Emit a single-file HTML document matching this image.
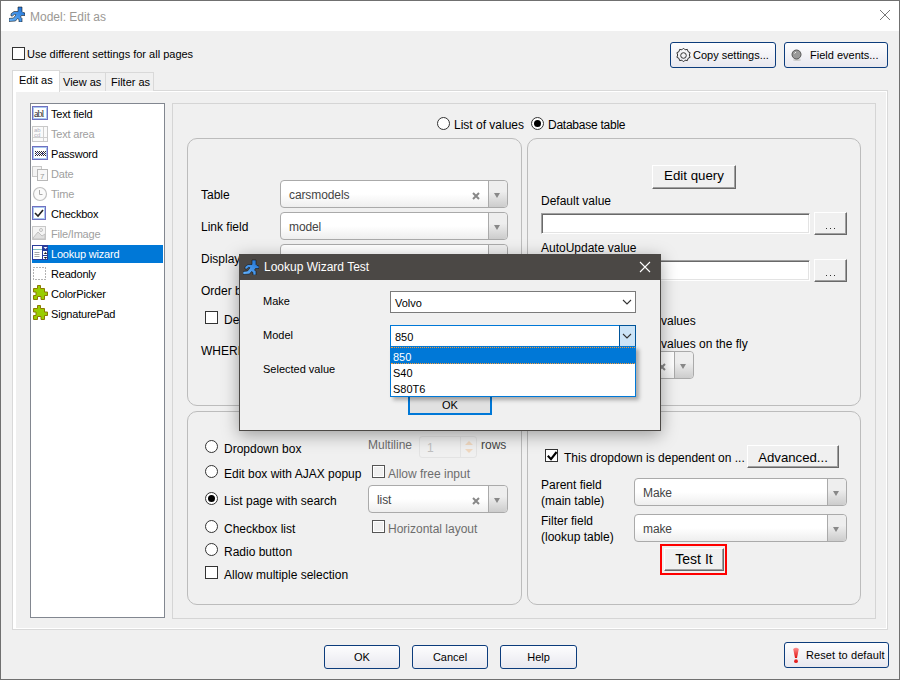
<!DOCTYPE html>
<html><head><meta charset="utf-8">
<style>
*{box-sizing:border-box;margin:0;padding:0}
html,body{width:900px;height:680px;overflow:hidden;background:#f0f0f0}
body{position:relative;font-family:"Liberation Sans",sans-serif;font-size:12px;color:#000}
.a{position:absolute}
.t{position:absolute;white-space:nowrap;line-height:1}
.lb{font-size:11px;letter-spacing:-0.2px}
.dis{color:#a0a0a0}
.win{left:0;top:0;width:900px;height:680px;border:1px solid #707070;background:#f0f0f0}
.title{left:1px;top:1px;width:898px;height:30px;background:#fff}
.chk{position:absolute;width:13px;height:13px;border:1px solid #333;background:#fff}
.rad{position:absolute;width:13px;height:13px;border:1px solid #333;border-radius:50%;background:#fff}
.rbtn{position:absolute;font-size:11px;border:1px solid #0c3c7c;border-radius:3px;background:linear-gradient(#fdfdfe,#e8e8ef);text-align:center;line-height:22px}
.gbox{position:absolute;border:1px solid #bcbcbc;border-radius:10px}
.btn3d{position:absolute;background:#f0f0f0;border-top:1px solid #fff;border-left:1px solid #fff;border-right:1px solid #696969;border-bottom:1px solid #696969;box-shadow:inset -1px -1px 0 #a0a0a0;text-align:center}
.sunk{position:absolute;background:#fff;border-top:1px solid #a0a0a0;border-left:1px solid #a0a0a0;border-right:1px solid #fff;border-bottom:1px solid #fff;box-shadow:inset 1px 1px 0 #696969,inset -1px -1px 0 #e3e3e3}
.s2{position:absolute;height:28px;border:1px solid #aaa;border-radius:4px;background:linear-gradient(to top,#eee 0%,#fff 50%)}
.s2 .arr{position:absolute;right:0;top:0;width:19px;height:26px;border-left:1px solid #aaa;border-radius:0 4px 4px 0;background:linear-gradient(to top,#ccc 0%,#eee 60%)}
.s2 .arr:after{content:"";position:absolute;left:5px;top:12px;border-left:3px solid transparent;border-right:3px solid transparent;border-top:5px solid #888}
.s2 .x{position:absolute;top:11px;width:8px;height:8px}
.s2 .v{position:absolute;left:8px;top:7px;white-space:nowrap;line-height:14px;color:#444;letter-spacing:-0.1px}
</style></head><body>
<div class="a win"></div>
<div class="a title"></div>
<!-- title icon -->
<svg class="a" style="left:9px;top:6px" width="16" height="16" viewBox="3 2 16 16"><defs><linearGradient id="rg1" x1="0" y1="1" x2="1" y2="0"><stop offset="0" stop-color="#6ab8ff"/><stop offset="1" stop-color="#1a6cd0"/></linearGradient></defs><path d="M12 3H16V7.5L17 8.5L19 9V11.5H15.5L14.5 13L16 14.5V18H13V15.5L11.5 14.5L9.5 17L3 17.5V14.5L7.5 14L10 10.8L8.8 10.2L6.5 12H5V9.8L8 7.5H12Z" fill="url(#rg1)" stroke="#111" stroke-width="0.7" stroke-opacity="0.8"/></svg>
<div class="t" style="left:30px;top:11px;color:#9b9894">Model: Edit as</div>
<svg class="a" style="left:879px;top:9px" width="12" height="12" viewBox="0 0 12 12"><path d="M1 1L11 11M11 1L1 11" stroke="#777" stroke-width="1"/></svg>

<!-- top checkbox -->
<div class="chk" style="left:12px;top:47px"></div>
<div class="t" style="left:27px;top:49px;font-size:11px">Use different settings for all pages</div>

<div class="rbtn" style="left:670px;top:42px;width:106px;height:26px"></div>
<svg class="a" style="left:675px;top:47px" width="17" height="17" viewBox="0 0 17 17"><path d="M8.5 1.2l1.6 1.6l2.3-.4l.6 2.2l2.1 1.1l-.8 2.3l.8 2.3l-2.1 1.1l-.6 2.2l-2.3-.4l-1.6 1.6l-1.6-1.6l-2.3.4l-.6-2.2l-2.1-1.1l.8-2.3l-.8-2.3l2.1-1.1l.6-2.2l2.3.4z" fill="none" stroke="#333" stroke-width="1"/><circle cx="8.5" cy="8.5" r="2.8" fill="none" stroke="#333" stroke-width="1"/></svg>
<div class="t" style="left:693px;top:50px;font-size:11px">Copy settings...</div>
<div class="rbtn" style="left:784px;top:42px;width:104px;height:26px"></div>
<svg class="a" style="left:790px;top:48px" width="14" height="14" viewBox="0 0 14 14"><ellipse cx="7" cy="12" rx="4" ry="1" fill="#ccc"/><circle cx="6.5" cy="6.5" r="4.5" fill="#999" stroke="#555" stroke-width="1"/><path d="M4.5 5.5l1.5-1.5" stroke="#eee" stroke-width="1"/></svg>
<div class="t" style="left:810px;top:50px;font-size:11px">Field events...</div>

<!-- tabs -->
<div class="a" style="left:12px;top:90px;width:876px;height:540px;border:1px solid #d9d9d9;background:#fff"></div>
<div class="a" style="left:16px;top:92px;width:870px;height:536px;background:#f0f0f0"></div>
<div class="a" style="left:59px;top:72px;width:47px;height:19px;border:1px solid #d9d9d9;border-bottom:none;background:#f0f0f0"></div>
<div class="a" style="left:105px;top:72px;width:49px;height:19px;border:1px solid #d9d9d9;border-bottom:none;background:#f0f0f0"></div>
<div class="a" style="left:12px;top:70px;width:48px;height:22px;border:1px solid #d9d9d9;border-bottom:none;background:#fff"></div>
<div class="t" style="left:19px;top:75px;font-size:11px">Edit as</div>
<div class="t" style="left:63px;top:77px;font-size:11px">View as</div>
<div class="t" style="left:111px;top:77px;font-size:11px">Filter as</div>

<!-- listbox -->
<div class="a" style="left:30px;top:103px;width:135px;height:515px;border:1px solid #828790;background:#fff"></div>

<!-- listbox items -->
<div class="a" style="left:32px;top:245px;width:131px;height:18px;background:#0078d7"></div>
<div class="t lb" style="left:51px;top:109px">Text field</div>
<svg class="a" style="left:32px;top:106px" width="16" height="16" viewBox="0 0 16 16"><rect x="0.5" y="0.5" width="15" height="13" fill="#fff" stroke="#7070c0"/><rect x="1.5" y="1.5" width="13" height="11" fill="none" stroke="#a8c8f0"/><text x="2" y="11" font-size="10" font-family="Liberation Serif" fill="#333" letter-spacing="-1">abl</text></svg>
<div class="t lb dis" style="left:51px;top:129px">Text area</div>
<svg class="a" style="left:32px;top:126px" width="16" height="16" viewBox="0 0 16 16"><rect x="0.5" y="0.5" width="15" height="15" fill="#fafafa" stroke="#c8c8c8"/><line x1="11.5" y1="1" x2="11.5" y2="15" stroke="#d0d0d0"/><line x1="1" y1="11.5" x2="15" y2="11.5" stroke="#d0d0d0"/><text x="2" y="6" font-size="6" fill="#b0b0c0">ab</text><text x="2" y="11" font-size="6" fill="#b0b0c0">cd</text></svg>
<div class="t lb" style="left:51px;top:149px">Password</div>
<svg class="a" style="left:32px;top:146px" width="16" height="16" viewBox="0 0 16 16"><rect x="0.5" y="0.5" width="15" height="13" fill="#fff" stroke="#7070c0"/><rect x="1.5" y="1.5" width="13" height="11" fill="none" stroke="#a8c8f0"/><path d="M3 5h1v1h-1zM5 5h1v1h-1zM7 5h1v1h-1zM9 5h1v1h-1zM11 5h1v1h-1zM13 5h1v1h-1zM4 6h1v1h-1zM6 6h1v1h-1zM8 6h1v1h-1zM10 6h1v1h-1zM12 6h1v1h-1zM3 7h1v1h-1zM7 7h1v1h-1zM9 7h1v1h-1zM11 7h1v1h-1zM13 7h1v1h-1zM4 8h1v1h-1zM6 8h1v1h-1zM8 8h1v1h-1zM10 8h1v1h-1zM12 8h1v1h-1zM3 9h1v1h-1zM5 9h1v1h-1zM7 9h1v1h-1zM9 9h1v1h-1zM11 9h1v1h-1zM13 9h1v1h-1z" fill="#2a2a3a"/><path d="M5 7h1v1h-1zM10 7h1v1h-1z" fill="#5050c0"/></svg>
<div class="t lb dis" style="left:51px;top:169px">Date</div>
<svg class="a" style="left:32px;top:166px" width="16" height="16" viewBox="0 0 16 16"><rect x="0.5" y="0.5" width="9" height="10" fill="#f4f4f4" stroke="#c8c8c8"/><rect x="5.5" y="3.5" width="10" height="11" fill="#f8f8f8" stroke="#b8b8b8"/><text x="8" y="13" font-size="8" fill="#999">7</text></svg>
<div class="t lb dis" style="left:51px;top:189px">Time</div>
<svg class="a" style="left:32px;top:186px" width="16" height="16" viewBox="0 0 16 16"><circle cx="8" cy="8" r="6.5" fill="#fafafa" stroke="#c0c0c0" stroke-width="1.2"/><path d="M7.5 4v4.5h3" stroke="#aaa" fill="none"/></svg>
<div class="t lb" style="left:51px;top:209px">Checkbox</div>
<svg class="a" style="left:32px;top:206px" width="16" height="16" viewBox="0 0 16 16"><rect x="0.5" y="0.5" width="13" height="13" fill="#fff" stroke="#7070c0"/><rect x="1.5" y="1.5" width="11" height="11" fill="none" stroke="#a8c8f0"/><path d="M3 7l3 3l5-6" stroke="#222" stroke-width="1.6" fill="none"/></svg>
<div class="t lb dis" style="left:51px;top:229px">File/Image</div>
<svg class="a" style="left:32px;top:226px" width="16" height="16" viewBox="0 0 16 16"><rect x="0.5" y="0.5" width="13" height="13" fill="#f4f4f4" stroke="#c8c8c8"/><path d="M1 12l5-6l4 4l3-2v5h-12z" fill="#e0e0e0" stroke="#c0c0c0"/><circle cx="9" cy="4" r="1.5" fill="none" stroke="#c0c0c0"/></svg>
<div class="t lb" style="left:51px;top:249px;color:#fff">Lookup wizard</div>
<svg class="a" style="left:32px;top:245px" width="16" height="16" viewBox="0 0 16 16"><rect x="0" y="0" width="16" height="15" fill="#2a3c9a"/><rect x="1" y="1" width="9" height="13" fill="#fff"/><path d="M1 4.5h9" stroke="#80c0c0"/><path d="M2.5 7.5h5M2.5 9.5h5M2.5 11.5h5" stroke="#a8a8a8"/><rect x="11" y="6" width="4" height="4" fill="#fff"/><rect x="11" y="11" width="4" height="3" fill="#fff"/><path d="M11.5 2h4l-2 2z" fill="#fff"/><path d="M11.8 9h3.4l-1.7-2z M11.8 12h3.4l-1.7 2z" fill="#222"/></svg>
<div class="t lb" style="left:51px;top:269px">Readonly</div>
<svg class="a" style="left:32px;top:266px" width="16" height="16" viewBox="0 0 16 16"><rect x="1.5" y="1.5" width="12" height="12" fill="none" stroke="#666" stroke-dasharray="1 2"/></svg>
<div class="t lb" style="left:51px;top:289px">ColorPicker</div>
<svg class="a" style="left:32px;top:285px" width="16" height="16" viewBox="0 0 16 16"><path d="M5.5 0.5H8.5V3.5H12.5V7H15.5V10.5H12.5V14.5H9V11.5H5.5V14.5H1.5V10.5H4V7H1.5V3.5H5.5Z" fill="#99cc00" stroke="#8c7a00" stroke-width="1"/></svg>
<div class="t lb" style="left:51px;top:309px">SignaturePad</div>
<svg class="a" style="left:32px;top:305px" width="16" height="16" viewBox="0 0 16 16"><path d="M5.5 0.5H8.5V3.5H12.5V7H15.5V10.5H12.5V14.5H9V11.5H5.5V14.5H1.5V10.5H4V7H1.5V3.5H5.5Z" fill="#99cc00" stroke="#8c7a00" stroke-width="1"/></svg>

<!-- inner panel -->
<div class="a" style="left:172px;top:103px;width:704px;height:516px;border:1px solid #d5d5d5"></div>

<div class="gbox" style="left:187px;top:138px;width:335px;height:268px"></div>
<div class="gbox" style="left:527px;top:138px;width:334px;height:268px"></div>
<div class="gbox" style="left:187px;top:411px;width:335px;height:194px"></div>
<div class="gbox" style="left:527px;top:411px;width:334px;height:194px"></div>

<!-- radios top -->
<div class="rad" style="left:437px;top:117px"></div>
<div class="t" style="left:454px;top:119px;font-size:12px;">List of values</div>
<div class="rad" style="left:531px;top:117px"><div style="position:absolute;left:2px;top:2px;width:7px;height:7px;border-radius:50%;background:#000"></div></div>
<div class="t" style="left:548px;top:119px;font-size:12px;letter-spacing:-0.25px">Database table</div>
<!-- left upper group -->
<div class="t" style="left:201px;top:189px;font-size:12px;">Table</div>
<div class="s2" style="left:280px;top:180px;width:228px;"><div class="v">carsmodels</div><svg class="x" style="left:191px" viewBox="0 0 8 8"><path d="M1 1L7 7M7 1L1 7" stroke="#888" stroke-width="2"/></svg><div class="arr"></div></div>
<div class="t" style="left:201px;top:221px;font-size:12px;">Link field</div>
<div class="s2" style="left:280px;top:212px;width:228px;"><div class="v">model</div><div class="arr"></div></div>
<div class="t" style="left:201px;top:253px;font-size:12px;">Display</div>
<div class="s2" style="left:280px;top:244px;width:228px;"><div class="v"></div><div class="arr"></div></div>
<div class="t" style="left:201px;top:285px;font-size:12px;">Order by</div>
<div class="s2" style="left:280px;top:276px;width:228px;"><div class="v"></div><div class="arr"></div></div>
<div class="chk" style="left:205px;top:311px;border-color:#333"></div>
<div class="t" style="left:224px;top:314px;font-size:12px;">Descending</div>
<div class="t" style="left:201px;top:345px;font-size:12px;">WHERE</div>
<!-- right upper group -->
<div class="btn3d" style="left:652px;top:165px;width:84px;height:24px;font-size:13.3px;line-height:19px">Edit query</div>
<div class="t" style="left:541px;top:195px;font-size:12px;">Default value</div>
<div class="sunk" style="left:541px;top:213px;width:269px;height:21px"></div>
<div class="btn3d" style="left:814px;top:212px;width:33px;height:23px"></div><div class="a" style="left:826px;top:228px;width:1px;height:1px;background:#333"></div><div class="a" style="left:830px;top:228px;width:1px;height:1px;background:#333"></div><div class="a" style="left:834px;top:228px;width:1px;height:1px;background:#333"></div>
<div class="t" style="left:541px;top:242px;font-size:12px;">AutoUpdate value</div>
<div class="sunk" style="left:541px;top:260px;width:269px;height:21px"></div>
<div class="btn3d" style="left:814px;top:259px;width:33px;height:23px"></div><div class="a" style="left:826px;top:275px;width:1px;height:1px;background:#333"></div><div class="a" style="left:830px;top:275px;width:1px;height:1px;background:#333"></div><div class="a" style="left:834px;top:275px;width:1px;height:1px;background:#333"></div>
<div class="chk" style="left:545px;top:314px;border-color:#333"></div>
<div class="t" style="left:661px;top:315px;font-size:12px;">values</div>
<div class="chk" style="left:545px;top:337px;border-color:#333"></div>
<div class="t" style="left:661px;top:338px;font-size:12px;">values on the fly</div>
<div class="s2" style="left:541px;top:351px;width:153px;"><div class="v"></div><svg class="x" style="left:116px" viewBox="0 0 8 8"><path d="M1 1L7 7M7 1L1 7" stroke="#888" stroke-width="2"/></svg><div class="arr"></div></div>
<!-- left lower group -->
<div class="rad" style="left:205px;top:440px"></div>
<div class="t" style="left:224px;top:443px;font-size:12px;">Dropdown box</div>
<div class="rad" style="left:205px;top:465px"></div>
<div class="t" style="left:224px;top:468px;font-size:12px;">Edit box with AJAX popup</div>
<div class="rad" style="left:205px;top:492px"><div style="position:absolute;left:2px;top:2px;width:7px;height:7px;border-radius:50%;background:#000"></div></div>
<div class="t" style="left:224px;top:495px;font-size:12px;">List page with search</div>
<div class="rad" style="left:205px;top:520px"></div>
<div class="t" style="left:224px;top:523px;font-size:12px;">Checkbox list</div>
<div class="rad" style="left:205px;top:543px"></div>
<div class="t" style="left:224px;top:546px;font-size:12px;">Radio button</div>
<div class="chk" style="left:205px;top:566px;border-color:#333"></div>
<div class="t" style="left:224px;top:569px;font-size:12px;">Allow multiple selection</div>
<div class="t" style="left:368px;top:439px;font-size:12px;color:#6d6d6d">Multiline</div>
<div class="a" style="left:419px;top:436px;width:58px;height:22px;border:1px solid #e3e3e3;border-radius:3px;background:#f0f0f0"><div class="t" style="left:7px;top:5px;color:#c0c0c0">1</div><div class="a" style="left:40px;top:0;width:1px;height:20px;background:#e3e3e3"></div><svg class="a" style="left:44px;top:2px" width="10" height="16" viewBox="0 0 10 16"><path d="M1 6l4-4l4 4z M1 10l4 4l4-4z" fill="#f0d8c0"/></svg></div>
<div class="t" style="left:481px;top:439px;font-size:12px;color:#444">rows</div>
<div class="chk" style="left:372px;top:465px;border-color:#555;background:#f0f0f0;box-shadow:inset 0 0 0 1px #fff"></div>
<div class="t" style="left:388px;top:468px;font-size:12px;color:#6d6d6d">Allow free input</div>
<div class="s2" style="left:368px;top:485px;width:140px;"><div class="v">list</div><svg class="x" style="left:103px" viewBox="0 0 8 8"><path d="M1 1L7 7M7 1L1 7" stroke="#888" stroke-width="2"/></svg><div class="arr"></div></div>
<div class="chk" style="left:372px;top:520px;border-color:#555;background:#f0f0f0;box-shadow:inset 0 0 0 1px #fff"></div>
<div class="t" style="left:388px;top:523px;font-size:12px;color:#6d6d6d">Horizontal layout</div>
<!-- right lower group -->
<div class="chk" style="left:545px;top:449px;border-color:#333"><svg style="position:absolute;left:1px;top:1px" width="11" height="11" viewBox="0 0 11 11"><path d="M0.8 4.8L4 8.2L9.6 1" stroke="#000" stroke-width="2.1" fill="none"/></svg></div>
<div class="t" style="left:564px;top:452px;font-size:12px;">This dropdown is dependent on ...</div>
<div class="btn3d" style="left:747px;top:445px;width:92px;height:23px;font-size:13.2px;line-height:24px">Advanced...</div>
<div class="t" style="left:541px;top:479px;font-size:12px;">Parent field</div>
<div class="t" style="left:541px;top:495px;font-size:12px;">(main table)</div>
<div class="s2" style="left:634px;top:478px;width:213px;"><div class="v">Make</div><div class="arr"></div></div>
<div class="t" style="left:541px;top:515px;font-size:12px;">Filter field</div>
<div class="t" style="left:541px;top:531px;font-size:12px;">(lookup table)</div>
<div class="s2" style="left:634px;top:514px;width:213px;"><div class="v">make</div><div class="arr"></div></div>
<div class="a" style="left:660px;top:544px;width:67px;height:31px;border:2px solid #f00"></div>
<div class="btn3d" style="left:664px;top:548px;width:60px;height:23px;font-size:14px;line-height:20px">Test It</div>

<!-- dialog -->
<div class="a" style="left:239px;top:254px;width:422px;height:177px;background:#f0f0f0;border:1px solid #4b4845;box-shadow:0 4px 16px rgba(0,0,0,0.35)"></div>
<div class="a" style="left:239px;top:254px;width:422px;height:26px;background:#4b4845"></div>
<svg class="a" style="left:243px;top:259px" width="16" height="16" viewBox="3 2 16 16"><defs><linearGradient id="rg2" x1="0" y1="1" x2="1" y2="0"><stop offset="0" stop-color="#6ab8ff"/><stop offset="1" stop-color="#1a6cd0"/></linearGradient></defs><path d="M12 3H16V7.5L17 8.5L19 9V11.5H15.5L14.5 13L16 14.5V18H13V15.5L11.5 14.5L9.5 17L3 17.5V14.5L7.5 14L10 10.8L8.8 10.2L6.5 12H5V9.8L8 7.5H12Z" fill="url(#rg2)" stroke="#111" stroke-width="0.7" stroke-opacity="0.8"/></svg>
<div class="t" style="left:264px;top:261px;color:#fff">Lookup Wizard Test</div>
<svg class="a" style="left:639px;top:261px" width="12" height="12" viewBox="0 0 12 12"><path d="M1 1L11 11M11 1L1 11" stroke="#fff" stroke-width="1.1"/></svg>
<div class="t" style="left:263px;top:296px;font-size:11px">Make</div>
<div class="t" style="left:263px;top:330px;font-size:11px">Model</div>
<div class="t" style="left:263px;top:364px;font-size:11px">Selected value</div>
<div class="a" style="left:390px;top:291px;width:246px;height:22px;border:1px solid #7a7a7a;background:#fff"></div>
<div class="t" style="left:395px;top:298px;font-size:11px">Volvo</div>
<svg class="a" style="left:622px;top:299px" width="10" height="6" viewBox="0 0 10 6"><path d="M1 1l4 4l4-4" stroke="#333" fill="none" stroke-width="1.1"/></svg>
<div class="a" style="left:490px;top:396px;width:0;height:0"></div>
<!-- OK -->
<div class="a" style="left:408px;top:390px;width:84px;height:25px;border:2px solid #0078d7;background:#e1e1e1"></div>
<div class="t" style="left:442px;top:400px;font-size:11px">OK</div>
<!-- model combo -->
<div class="a" style="left:390px;top:325px;width:246px;height:22px;border:1px solid #0078d7;background:#fff"></div>
<div class="t" style="left:395px;top:332px;font-size:11px">850</div>
<div class="a" style="left:619px;top:325px;width:17px;height:22px;border:1px solid #005499;background:#cce4f7"></div>
<svg class="a" style="left:622px;top:333px" width="10" height="6" viewBox="0 0 10 6"><path d="M1 1l4 4l4-4" stroke="#333" fill="none" stroke-width="1.1"/></svg>
<!-- list -->
<div class="a" style="left:390px;top:346px;width:246px;height:51px;border:1px solid #0078d7;background:#fff;box-shadow:3px 3px 4px rgba(0,0,0,0.3)"></div>
<div class="a" style="left:391px;top:347px;width:244px;height:17px;background:#0078d7;border-top:1px dotted #f59a3a;border-bottom:1px dotted #f59a3a"></div>
<div class="t" style="left:393px;top:352px;font-size:11px;color:#fff">850</div>
<div class="t" style="left:393px;top:368px;font-size:11px">S40</div>
<div class="t" style="left:393px;top:384px;font-size:11px">S80T6</div>

<!-- bottom buttons -->
<div class="rbtn" style="left:324px;top:645px;width:76px;height:24px">OK</div>
<div class="rbtn" style="left:412px;top:645px;width:76px;height:24px">Cancel</div>
<div class="rbtn" style="left:500px;top:645px;width:77px;height:24px">Help</div>
<div class="rbtn" style="left:784px;top:642px;width:105px;height:26px"></div>
<svg class="a" style="left:792px;top:647px" width="8" height="17" viewBox="0 0 8 17"><defs><linearGradient id="ex" x1="0" y1="0" x2="0" y2="1"><stop offset="0" stop-color="#ff9090"/><stop offset="1" stop-color="#e01010"/></linearGradient></defs><path d="M1.2 2Q4 -0.5 6.8 2L5 11H3z" fill="url(#ex)"/><circle cx="4" cy="14.2" r="1.9" fill="#e52020"/></svg>
<div class="t" style="left:806px;top:650px;font-size:11px;letter-spacing:0.1px">Reset to default</div>

</body></html>
